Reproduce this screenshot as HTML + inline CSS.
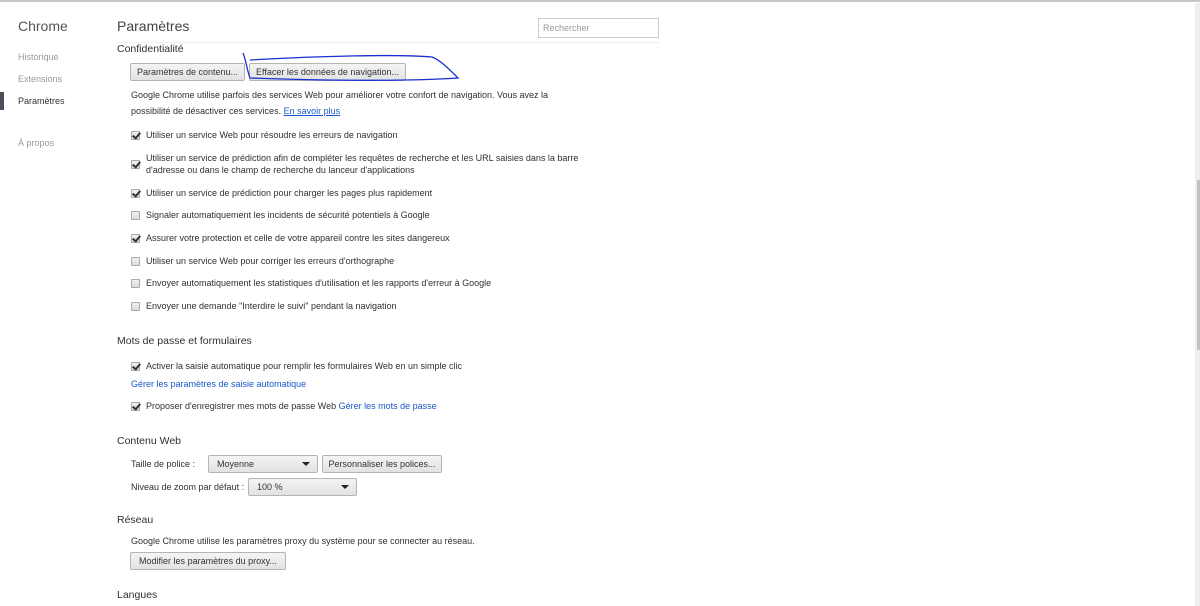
<!DOCTYPE html>
<html><head><meta charset="utf-8"><style>
*{margin:0;padding:0;box-sizing:border-box}
body{width:1200px;height:606px;background:#fff;position:relative;overflow:hidden;font-family:"Liberation Sans",Arial,sans-serif;color:#303030}
.t{position:absolute;white-space:nowrap;font-size:9px;line-height:12px}
.h{position:absolute;white-space:nowrap;font-size:10.5px;line-height:14px;color:#303030}
.nav{position:absolute;left:18px;font-size:9px;line-height:12px;color:#999}
.btn{position:absolute;height:18px;border:1px solid #b5b5b5;border-radius:2px;background:linear-gradient(#f4f4f4,#e2e2e2);font-size:9px;line-height:16px;text-align:center;color:#333;white-space:nowrap}
.cb{position:absolute;left:131px;width:9px;height:9px;border:1px solid #aaa;background:linear-gradient(#f0f0f0,#dcdcdc);border-radius:1px}
.cb.c::after{content:"";position:absolute;left:2px;top:-1px;width:3px;height:6px;border:solid #333;border-width:0 2px 2px 0;transform:rotate(40deg)}
.sel{position:absolute;height:18px;border:1px solid #b5b5b5;border-radius:2px;background:linear-gradient(#f4f4f4,#e2e2e2);font-size:9px;line-height:16px;padding-left:8px;color:#333}
.sel::after{content:"";position:absolute;right:7px;top:6px;border:4px solid transparent;border-top:4px solid #222;border-bottom:0}
a{color:#1a58c8;text-decoration:none}
</style></head><body>
<div style="position:absolute;left:0;top:0;width:1200px;height:2px;background:#c8c8c8"></div>
<div style="position:absolute;left:1195px;top:3px;width:5px;height:603px;background:#efefef"></div>
<div style="position:absolute;left:1197px;top:180px;width:3px;height:170px;background:#c2c2c2"></div>

<div style="position:absolute;left:18px;top:17px;font-size:14px;line-height:18px;color:#555">Chrome</div>
<div class="nav" style="top:51px">Historique</div>
<div class="nav" style="top:73px">Extensions</div>
<div class="nav" style="top:95px;color:#333">Paramètres</div>
<div style="position:absolute;left:0;top:92px;width:4px;height:18px;background:#4a4f5a"></div>
<div class="nav" style="top:137px">À propos</div>

<div style="position:absolute;left:117px;top:17px;font-size:14px;line-height:18px;color:#444">Paramètres</div>
<div style="position:absolute;left:117px;top:42px;width:542px;height:1px;background:#eee"></div>
<div style="position:absolute;left:538px;top:18px;width:121px;height:20px;border:1px solid #ccc;font-size:9px;line-height:18px;padding-left:4px;color:#999">Rechercher</div>

<div class="h" style="left:117px;top:42px">Confidentialité</div>
<div class="btn" style="left:130px;top:63px;width:115px">Paramètres de contenu...</div>
<div class="btn" style="left:249px;top:63px;width:157px">Effacer les données de navigation...</div>
<svg style="position:absolute;left:0;top:0" width="1200" height="606"><path d="M243 53 C246 60 247 70 250 78 C300 80 400 82 458 78 C448 68 440 60 432 57 C400 54 320 56 250 60" fill="none" stroke="#1a2fd0" stroke-width="1.3"/></svg>
<div class="t" style="left:131px;top:89px">Google Chrome utilise parfois des services Web pour améliorer votre confort de navigation. Vous avez la</div>
<div class="t" style="left:131px;top:105px">possibilité de désactiver ces services. <a style="text-decoration:underline">En savoir plus</a></div>

<div class="cb c" style="top:131px"></div><div class="t" style="left:146px;top:129px">Utiliser un service Web pour résoudre les erreurs de navigation</div>
<div class="cb c" style="top:160px"></div><div class="t" style="left:146px;top:152px">Utiliser un service de prédiction afin de compléter les requêtes de recherche et les URL saisies dans la barre</div>
<div class="t" style="left:146px;top:164px">d'adresse ou dans le champ de recherche du lanceur d'applications</div>
<div class="cb c" style="top:189px"></div><div class="t" style="left:146px;top:187px">Utiliser un service de prédiction pour charger les pages plus rapidement</div>
<div class="cb" style="top:211px"></div><div class="t" style="left:146px;top:209px">Signaler automatiquement les incidents de sécurité potentiels à Google</div>
<div class="cb c" style="top:234px"></div><div class="t" style="left:146px;top:232px">Assurer votre protection et celle de votre appareil contre les sites dangereux</div>
<div class="cb" style="top:257px"></div><div class="t" style="left:146px;top:255px">Utiliser un service Web pour corriger les erreurs d'orthographe</div>
<div class="cb" style="top:279px"></div><div class="t" style="left:146px;top:277px">Envoyer automatiquement les statistiques d'utilisation et les rapports d'erreur à Google</div>
<div class="cb" style="top:302px"></div><div class="t" style="left:146px;top:300px">Envoyer une demande "Interdire le suivi" pendant la navigation</div>

<div class="h" style="left:117px;top:334px">Mots de passe et formulaires</div>
<div class="cb c" style="top:362px"></div><div class="t" style="left:146px;top:360px">Activer la saisie automatique pour remplir les formulaires Web en un simple clic</div>
<div class="t" style="left:131px;top:378px"><a>Gérer les paramètres de saisie automatique</a></div>
<div class="cb c" style="top:402px"></div><div class="t" style="left:146px;top:400px">Proposer d'enregistrer mes mots de passe Web <a>Gérer les mots de passe</a></div>

<div class="h" style="left:117px;top:434px">Contenu Web</div>
<div class="t" style="left:131px;top:458px">Taille de police :</div>
<div class="sel" style="left:208px;top:455px;width:110px">Moyenne</div>
<div class="btn" style="left:322px;top:455px;width:120px">Personnaliser les polices...</div>
<div class="t" style="left:131px;top:481px">Niveau de zoom par défaut :</div>
<div class="sel" style="left:248px;top:478px;width:109px">100 %</div>

<div class="h" style="left:117px;top:513px">Réseau</div>
<div class="t" style="left:131px;top:535px">Google Chrome utilise les paramètres proxy du système pour se connecter au réseau.</div>
<div class="btn" style="left:130px;top:552px;width:156px">Modifier les paramètres du proxy...</div>
<div class="h" style="left:117px;top:588px">Langues</div>
</body></html>
